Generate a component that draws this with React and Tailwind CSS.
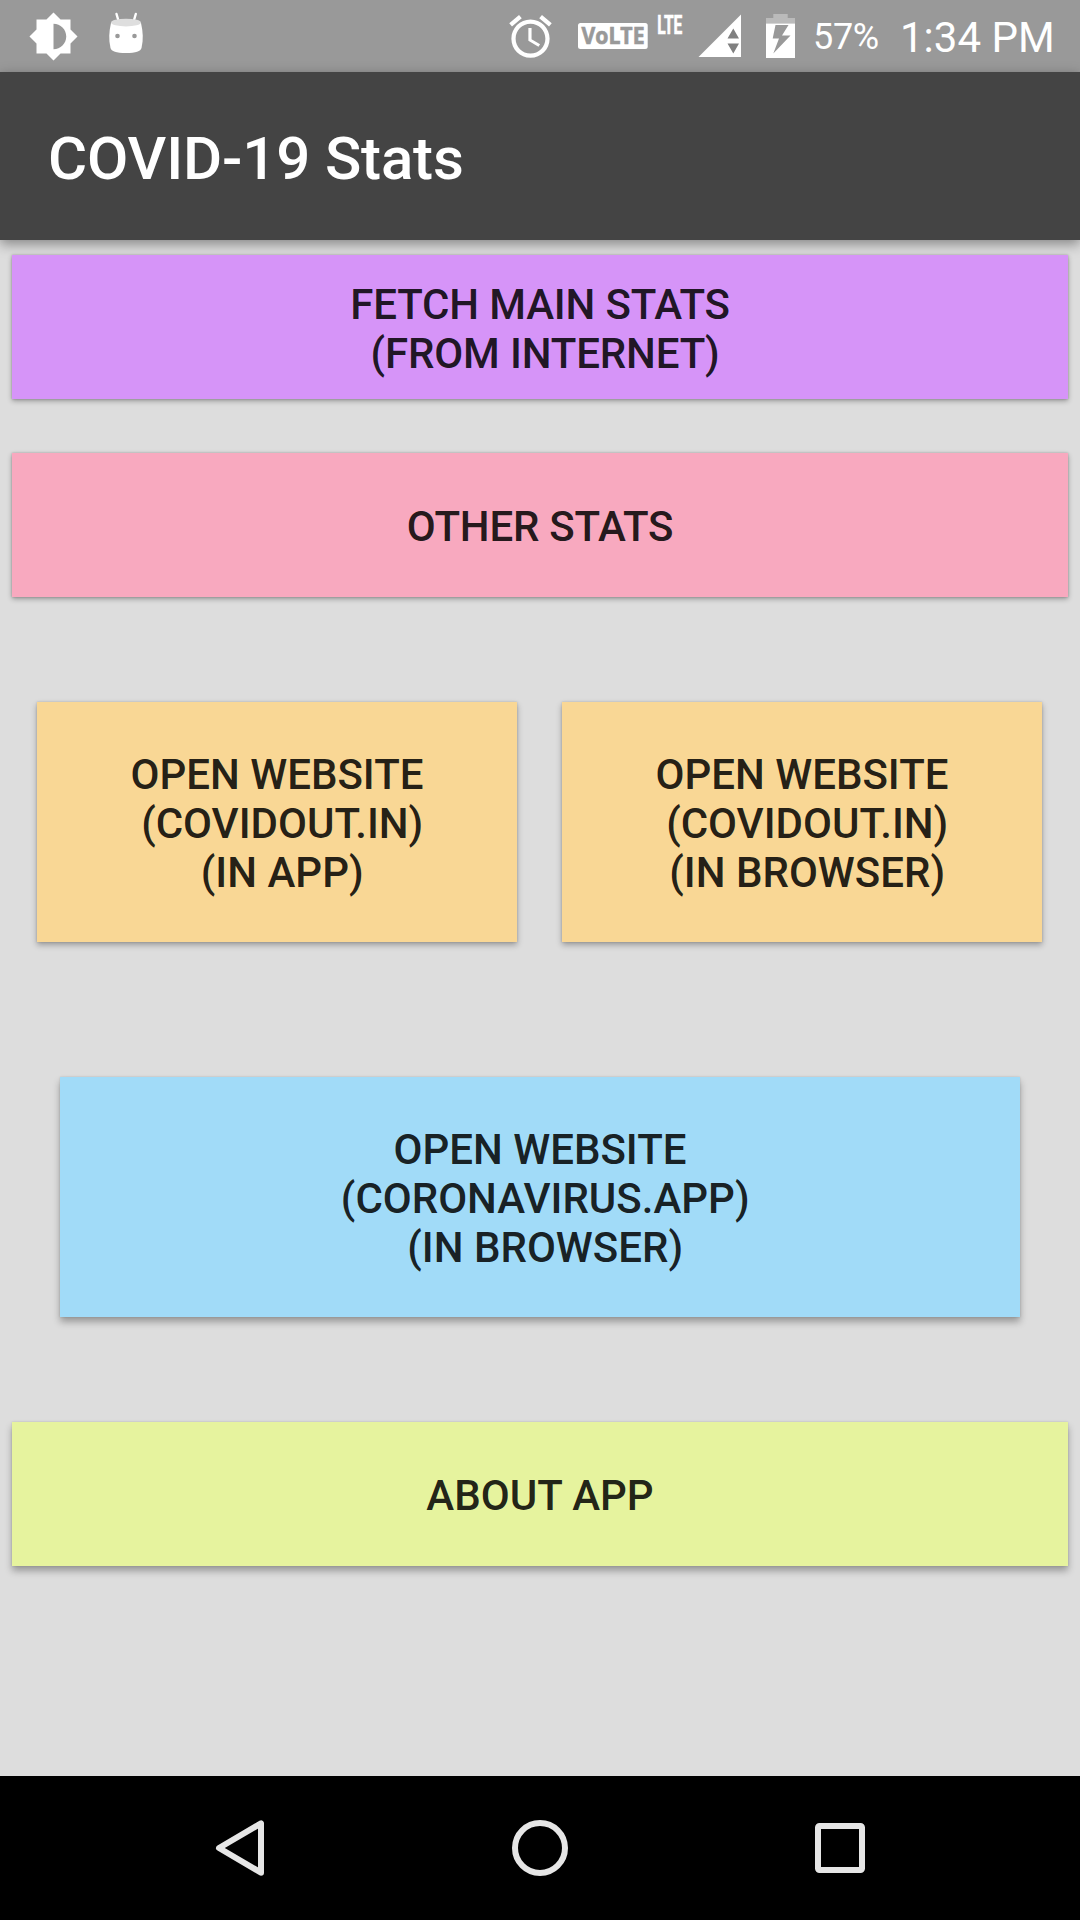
const shadows = {
  low: 'shadow-[0_0_2px_rgba(0,0,0,0.2),0_2px_5px_rgba(0,0,0,0.32)]',
  mid: 'shadow-[0_0_2px_rgba(0,0,0,0.16),0_3px_6px_rgba(0,0,0,0.3)]',
  high: 'shadow-[0_0_2px_rgba(0,0,0,0.14),0_5px_7px_rgba(0,0,0,0.3)]',
};

function ActionButton({ lines, className }) {
  return (
    <button
      className={`flex flex-col items-center justify-center whitespace-pre pt-[3px] text-[42px] font-medium leading-[49px] text-black/87 ${className}`}
    >
      {lines.map((line, i) => (
        <span key={line}>{i > 0 ? ' ' + line : line}</span>
      ))}
    </button>
  );
}

function StatusBar() {
  return (
    <div className="flex h-[72px] shrink-0 items-start bg-[#999999] text-white">
      <svg className="ml-[28px] mt-[10.5px] h-[51px] w-[51px]" viewBox="0 0 24 24" fill="currentColor">
        <path d="M20 15.31 23.31 12 20 8.69V4h-4.69L12 .69 8.69 4H4v4.69L.69 12 4 15.31V20h4.69L12 23.31 15.31 20H20zM12 18V6c3.31 0 6 2.69 6 6s-2.69 6-6 6z" />
      </svg>
      <svg className="ml-[26px] h-[72px] w-[42px]" viewBox="105 0 42 72">
        <path d="M116.5 14l2.2 7.5M135.8 14l-2.2 7.5" stroke="#fff" strokeWidth="2.4" strokeLinecap="round" />
        <path d="M111 23C109 31 108.5 40 110.5 48C111.5 51.5 116 53 126 53S140.5 51.5 141.5 48C143.5 40 143 31 141 23Z" fill="#fff" />
        <ellipse cx="126" cy="22.6" rx="15" ry="3.9" fill="#dedede" />
        <circle cx="117.5" cy="36" r="2.3" fill="#999" />
        <circle cx="134.5" cy="36" r="2.3" fill="#999" />
      </svg>
      <svg className="ml-[358px] mt-[11px] h-[51px] w-[51px]" viewBox="0 0 24 24" fill="currentColor">
        <path d="M22 5.72l-4.6-3.86-1.29 1.53 4.6 3.86L22 5.72zM7.88 3.39L6.6 1.86 2 5.71l1.29 1.53 4.59-3.85zM12.5 8H11v6l4.75 2.85.75-1.23-4-2.37V8zM12 4c-4.97 0-9 4.03-9 9s4.02 9 9 9c4.97 0 9-4.03 9-9s-4.03-9-9-9zm0 16c-3.87 0-7-3.13-7-7s3.13-7 7-7 7 3.13 7 7-3.13 7-7 7z" />
      </svg>
      <svg className="ml-[20px] h-[72px] w-[120px] overflow-visible" viewBox="576 0 120 72">
        <rect x="578" y="23" width="69.7" height="26" rx="2.5" fill="#fff" />
        <text x="581.5" y="44.3" fontFamily="Open Sans, sans-serif" fontWeight="700" fontSize="23.5" textLength="63" lengthAdjust="spacingAndGlyphs" fill="#999" stroke="#999" strokeWidth="0.7">VoLTE</text>
        <text x="657.3" y="33.5" fontFamily="Roboto, sans-serif" fontWeight="700" fontSize="26" textLength="25" lengthAdjust="spacingAndGlyphs" fill="#fff" stroke="#fff" strokeWidth="0.7">LTE</text>
      </svg>
      <svg className="h-[72px] w-[46px]" viewBox="696 0 46 72">
        <path d="M698.5 57H741V14.5Z" fill="#fff" />
        <path d="M733.3 28.5L739 38.5H727.5ZM733.3 53.5L739 43.5H727.5Z" fill="#808080" />
      </svg>
      <svg className="ml-[22px] h-[72px] w-[33px]" viewBox="764 0 33 72">
        <path d="M766 23.5V18H773.3V14H787.7V18H795V23.5Z" fill="#bababa" />
        <path fillRule="evenodd" d="M766 23.5H795V58H766ZM775.5 25L772.7 38.5H779L773.3 53.5L790.5 35.5H782L788.5 25Z" fill="#fff" />
      </svg>
      <span className="ml-[16px] mt-[16px] w-[68px] text-[36px] leading-[42px] tracking-[-0.3px]">57%</span>
      <span className="ml-[19px] mt-[13px] whitespace-nowrap text-[42px] leading-[49px]">1:34 PM</span>
    </div>
  );
}

function NavBar() {
  return (
    <div className="flex h-[144px] shrink-0 items-center justify-center gap-[228px] bg-black">
      <svg className="h-[72px] w-[72px]" viewBox="204 1812 72 72" fill="none" stroke="#e6e6e6" strokeWidth="6" strokeLinejoin="round">
        <path d="M261 1823.3V1872.7L219 1848Z" />
      </svg>
      <svg className="h-[72px] w-[72px]" viewBox="504 1812 72 72" fill="none" stroke="#e6e6e6" strokeWidth="6">
        <circle cx="540" cy="1848" r="25" />
      </svg>
      <svg className="h-[72px] w-[72px]" viewBox="804 1812 72 72" fill="none" stroke="#e6e6e6" strokeWidth="6">
        <rect x="818" y="1826" width="44" height="44" rx="1.5" />
      </svg>
    </div>
  );
}

export default function App() {
  return (
    <div className="flex h-[1920px] w-[1080px] flex-col overflow-hidden bg-[#dddddd] font-[Roboto,sans-serif]">
      <StatusBar />
      <header className="flex h-[168px] shrink-0 items-center bg-[#444444] pl-[48px] pt-[5px] text-[60px] font-medium tracking-[-0.15px] text-white shadow-[0_4px_12px_rgba(0,0,0,0.4)]">
        <h1>COVID-19 Stats</h1>
      </header>
      <main className="flex flex-1 flex-col pt-[15px]">
        <ActionButton lines={['FETCH MAIN STATS', '(FROM INTERNET)']} className={`mx-[12px] h-[144px] bg-[#d694f8] tracking-[-0.15px] ${shadows.low}`} />
        <ActionButton lines={['OTHER STATS']} className={`mx-[12px] mt-[54px] h-[144px] bg-[#f8a9bf] tracking-[-0.22px] ${shadows.low}`} />
        <div className="mt-[105px] flex gap-[45px] pl-[37px]">
          <ActionButton lines={['OPEN WEBSITE', '(COVIDOUT.IN)', '(IN APP)']} className={`h-[240px] w-[480px] bg-[#f9d795] ${shadows.mid}`} />
          <ActionButton lines={['OPEN WEBSITE', '(COVIDOUT.IN)', '(IN BROWSER)']} className={`h-[240px] w-[480px] bg-[#f9d795] ${shadows.mid}`} />
        </div>
        <ActionButton lines={['OPEN WEBSITE', '(CORONAVIRUS.APP)', '(IN BROWSER)']} className={`mx-[60px] mt-[135px] h-[240px] bg-[#a1dbf8] ${shadows.high}`} />
        <ActionButton lines={['ABOUT APP']} className={`mx-[12px] mt-[105px] h-[144px] bg-[#e6f39e] ${shadows.high}`} />
      </main>
      <NavBar />
    </div>
  );
}
